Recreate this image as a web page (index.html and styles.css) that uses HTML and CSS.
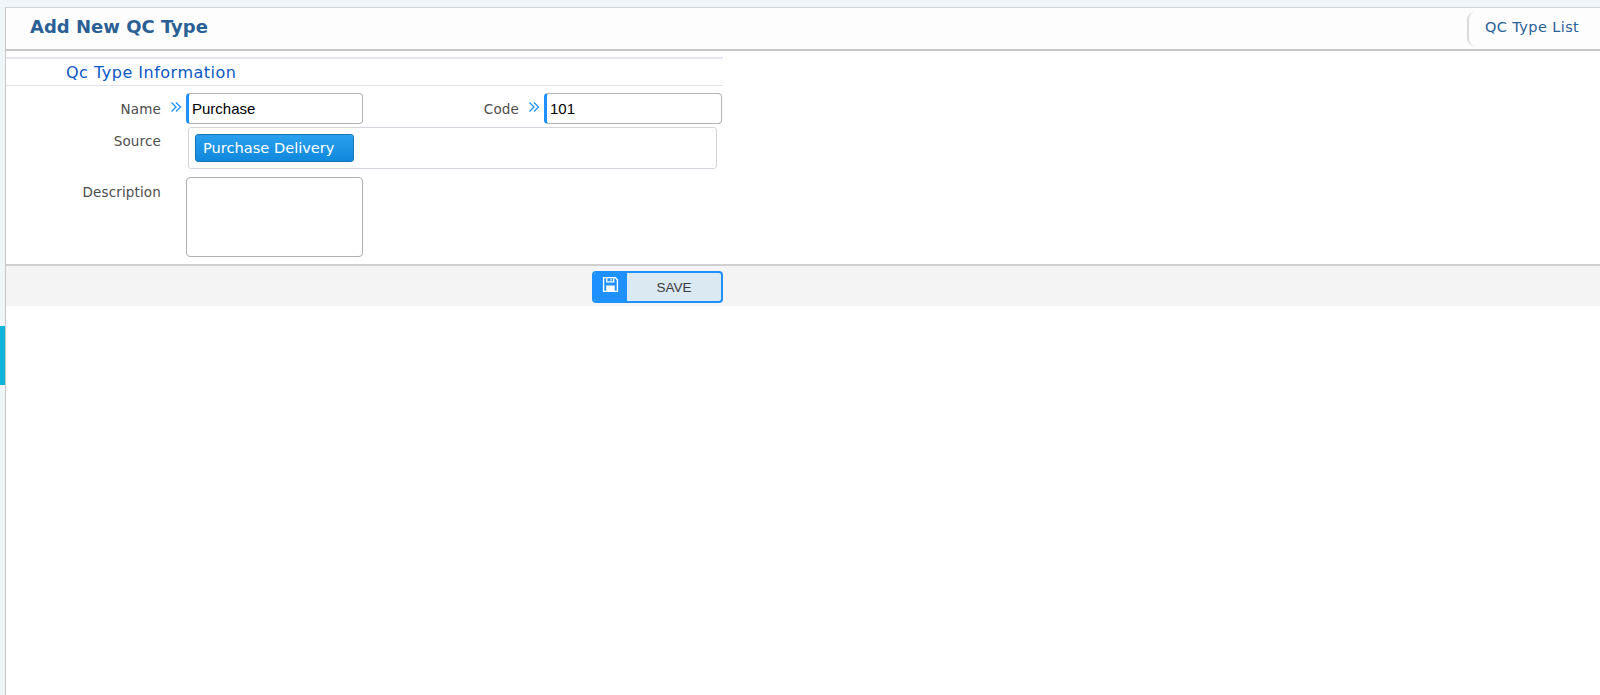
FILE: index.html
```html
<!DOCTYPE html>
<html lang="en">
<head>
<meta charset="utf-8">
<title>Add New QC Type</title>
<link rel="stylesheet" href="styles.css">
</head>
<body>
<div class="tab"></div>
<main class="panel">
  <header class="head">
    <h1 class="title">Add New QC Type</h1>
    <a class="list-link">QC Type List</a>
  </header>
  <form class="form">
    <h2 class="section">Qc Type Information</h2>
    <div class="row row-top">
      <div class="field">
        <label class="label">Name</label>
        <svg class="chev" viewBox="0 0 12 12" width="12" height="12"><path d="M1.5 1.5 6 6l-4.500 4.500M6 1.500 10.500 6 6 10.500" fill="none" stroke="#1e90ff" stroke-width="1.300"/></svg>
        <input class="input" value="Purchase">
      </div>
      <div class="field field-code">
        <label class="label label-code">Code</label>
        <svg class="chev" viewBox="0 0 12 12" width="12" height="12"><path d="M1.5 1.5 6 6l-4.500 4.500M6 1.500 10.500 6 6 10.500" fill="none" stroke="#1e90ff" stroke-width="1.300"/></svg>
        <input class="input input-code" value="101">
      </div>
    </div>
    <div class="row row-source">
      <label class="label label-top">Source</label>
      <div class="chips"><span class="chip">Purchase Delivery</span></div>
    </div>
    <div class="row row-desc">
      <label class="label label-top label-desc">Description</label>
      <textarea class="area"></textarea>
    </div>
  </form>
  <footer class="foot">
    <button class="save" type="button">
      <span class="save-icon">
        <svg viewBox="0 0 16 16" width="17" height="17"><path d="M1.500 1.500h11l2 2v11h-13z" fill="none" stroke="#fff" stroke-width="1.300"/><path d="M4.500 1.500v4h6.500v-4M8.500 2.500v2" fill="none" stroke="#fff" stroke-width="1.200"/><path d="M4 9h8v5.500H4z" fill="#fff"/></svg>
      </span>
      <span class="save-text">SAVE</span>
    </button>
  </footer>
</main>
</body>
</html>
```

FILE: styles.css
```css
* { box-sizing: border-box; }
html, body { height: 100%; }
body {
  margin: 0;
  padding: 7px 0 0 5px;
  background: #eef6f9;
  overflow: hidden;
  font-family: "DejaVu Sans", sans-serif;
  position: relative;
}
.tab {
  position: absolute;
  left: 0;
  top: 326px;
  width: 5px;
  height: 59px;
  background: #0db4d9;
}
.panel {
  height: 100%;
  background: #fff;
  border-top: 1px solid #d0d4d6;
  border-left: 1px solid #c8c8c8;
}
.head {
  height: 43px;
  background: #fdfdfe;
  border-bottom: 2px solid #c4c6c8;
  display: flex;
  align-items: center;
  justify-content: space-between;
}
.title {
  margin: 0 0 4px 24px;
  font-size: 18px;
  font-weight: 700;
  color: #2a6095;
}
.list-link {
  height: 34px;
  width: 133px;
  padding: 7px 0 0 16px;
  border-left: 2px solid #d8dadc;
  border-radius: 8px 0 0 8px;
  font-size: 14.500px;
  letter-spacing: 0.400px;
  color: #2a6095;
}
.form {
  width: 717px;
  padding-top: 6px;
}
.section {
  margin: 0;
  height: 29px;
  padding: 4px 0 0 60px;
  border-top: 2px solid #e6e6f2;
  border-bottom: 1px solid #e0e0ec;
  font-size: 16px;
  letter-spacing: 0.500px;
  font-weight: 400;
  color: #0b57c4;
}
.row { display: flex; }
.row-top { padding-top: 7px; height: 41px; }
.field { display: flex; align-items: flex-start; }
.label {
  width: 155px;
  text-align: right;
  padding-top: 8px;
  font-size: 13.500px;
  letter-spacing: 0.150px;
  color: #4d4d4d;
}
.label-code { width: 156px; }
.label-top { padding-top: 6px; }
.label-desc { padding-top: 7px; }
.chev { margin: 8px 4px 0 9px; flex: none; }
.input {
  width: 177px;
  height: 31px;
  padding: 0 0 0 3px;
  border: 1px solid #b4b4b4;
  border-left: 3px solid #1e90ff;
  border-radius: 4px;
  background: #fff;
  font-family: "Liberation Sans", sans-serif;
  font-size: 15px;
  color: #000;
  outline: none;
}
.input-code { width: 178px; }
.row-source { height: 42px; margin-bottom: 8px; }
.chips {
  width: 529px;
  height: 42px;
  margin-left: 27px;
  padding: 6px;
  border: 1px solid #d4d4dc;
  border-radius: 3px;
}
.chip {
  display: block;
  width: 159px;
  height: 28px;
  padding: 4px 0 0 7px;
  background: linear-gradient(#2aa0ee, #1088dc);
  border: 1px solid #1676b8;
  border-radius: 3px;
  font-size: 14.600px;
  color: #fff;
}
.row-desc { height: 87px; }
.area {
  width: 177px;
  height: 80px;
  margin-left: 25px;
  border: 1px solid #b0b0b0;
  border-radius: 4px;
  background: #fff;
  resize: none;
  outline: none;
}
.foot {
  width: 100%;
  height: 42px;
  background: #f4f4f4;
  border-top: 2px solid #cfcfcf;
  padding: 5px 0 0 586px;
}
.save {
  display: flex;
  width: 131px;
  height: 32px;
  padding: 0;
  border: 2px solid #1e90ff;
  border-radius: 4px;
  background: #dbe9f2;
  overflow: hidden;
}
.save-icon {
  width: 33px;
  height: 100%;
  background: #1e90ff;
  display: flex;
  align-items: flex-start;
  justify-content: center;
  padding-top: 3px;
}
.save-text {
  flex: 1;
  text-align: center;
  padding-top: 7px;
  font-family: "Liberation Sans", sans-serif;
  font-size: 13.500px;
  color: #3c3c3c;
}
```
